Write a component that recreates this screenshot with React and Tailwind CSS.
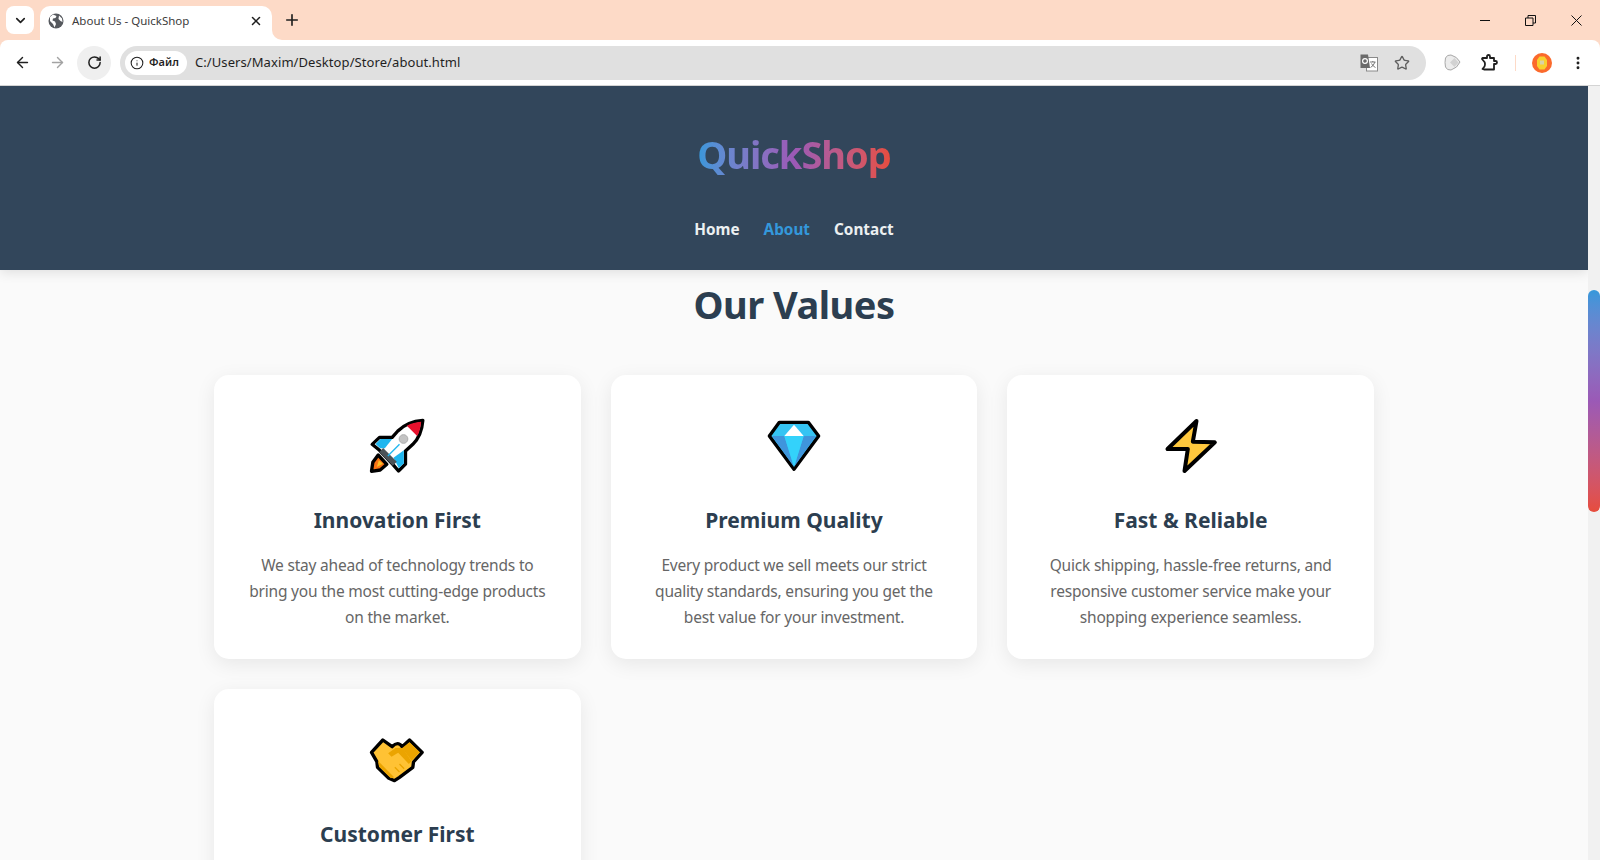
import { ArrowLeft, ArrowRight, RotateCw, ChevronDown, X, Plus, Info, Star, EllipsisVertical } from 'lucide-react'

/* ── Emoji drawings (viewBox sits in 3x reference coordinates) ── */
function Rocket() {
  return (
    <svg width="60" height="60" viewBox="52.5 33 180 180">
      <path d="M86 150 L70 172 L66 199 L92 195 L112 178Z" fill="#f97316" stroke="#000" strokeWidth="10" strokeLinejoin="round" />
      <path d="M82 186 L88 166 L100 176Z" fill="#fbbf24" />
      <path d="M220 46 C190 48 165 58 145 78 L128 97 L90 97 L68 118 L90 136 L130 178 L147 198 L168 177 L168 138 L190 118 C210 98 218 72 220 46Z" fill="#fff" stroke="#000" strokeWidth="10" strokeLinejoin="round" />
      <path d="M78 117 L93 102 L128 102 L106 130 L92 130Z" fill="#1fb6ef" />
      <path d="M132 158 L163 136 L163 175 L148 190Z" fill="#1fb6ef" />
      <path d="M172 62 C186 54 200 51 215 50 C213 68 210 82 203 93Z" fill="#e8112d" />
      <path d="M101 129 L142 170 L130 182 L89 141Z" fill="#4b5258" />
      <path d="M115 153 L150 118" stroke="#1fb6ef" strokeWidth="4" />
      <circle cx="162" cy="102" r="13" fill="#c4c4c4" stroke="#adadad" strokeWidth="3" />
    </svg>
  )
}

function Diamond() {
  return (
    <svg width="60" height="60" viewBox="57 33 180 180">
      <path d="M103 52 H190 L221 93 L147 193 L73 93Z" fill="#35c4f3" stroke="#000" strokeWidth="10" strokeLinejoin="round" />
      <path d="M81 93 H118 L147 186Z" fill="#3f95dc" />
      <path d="M213 93 H176 L147 186Z" fill="#3f95dc" />
      <path d="M118 93 H176 L147 186Z" fill="#33d2fb" />
      <path d="M147 59 L118 93 H176Z" fill="#fff" />
    </svg>
  )
}

function Bolt() {
  return (
    <svg width="60" height="60" viewBox="91.5 33 180 180">
      <path d="M198 48 L111 132 L172 132 L162 198 L253 112 L187 110Z" fill="#ffc83d" stroke="#000" strokeWidth="12" strokeLinejoin="round" />
    </svg>
  )
}

function Handshake() {
  return (
    <svg width="60" height="60" viewBox="52.5 30 180 180">
      <path d="M66 97 L100 60 L128 80 Q145 62 158 80 L180 60 L218 97 L192 126 L190 142 L150 172 L135 182 L118 175 L84 142 L82 125Z" fill="#ffc234" stroke="#000" strokeWidth="10" strokeLinejoin="round" />
      <path d="M158 84 L180 67 L211 97 L186 122 Z" fill="#eba400" />
      <path d="M85 122 L134 172 L124 175 L89 140Z" fill="#eba400" />
      <path d="M116 100 L138 84 L160 84 L186 124 L178 132 L146 98 L126 110Z" fill="#eba400" />
      <path d="M150 156 L136 142 M164 146 L150 132" stroke="#eba400" strokeWidth="4" />
    </svg>
  )
}

/* ── Browser chrome bits ─────────────────────────────── */
function Globe() {
  return (
    <svg width="16" height="16" viewBox="0 0 16 16">
      <circle cx="8" cy="8" r="7.5" fill="#56595e" />
      <path d="M5 1.5 L8.5 3 L7.5 5 L5 5.5 L4.5 7.5 L7 8.5 L8 11 L6.5 14.5 L5 11 L2 8 L2 4Z" fill="#fff" />
      <path d="M11 2.5 L14 5.5 L14.5 9 L12.5 8 L10.5 6 Z" fill="#fff" />
    </svg>
  )
}

function Translate() {
  return (
    <svg width="18" height="18" viewBox="0 0 18 18">
      <rect x="6.5" y="3.5" width="11" height="13.5" fill="#fff" stroke="#8a8a8a" />
      <path d="M0.5 0.5 H8 L10 14 H0.5Z" fill="#6b6b6b" />
      <circle cx="5" cy="7" r="2.4" fill="none" stroke="#fff" strokeWidth="1.2" />
      <path d="M10 8 H15.5 M12.8 7 V8 M15 8 Q13.5 12 10.5 13.5 M11.5 9.5 Q13 12.5 15.5 13.5" fill="none" stroke="#6b6b6b" strokeWidth="0.9" />
    </svg>
  )
}

function Blob() {
  return (
    <svg width="17" height="17" viewBox="0 0 17 17">
      <path d="M1.5 4 Q3 0.5 7 1 Q13 2.5 16 8 Q13.5 14 7 16 Q3 16.5 1.5 13 Q0.5 8.5 1.5 4Z" fill="#ececec" stroke="#a8a8a8" />
      <path d="M6 8.5 L10.5 4 L14.5 8.5 L10.5 13Z" fill="#d2d2d2" />
    </svg>
  )
}

function Extensions() {
  return (
    <svg width="17" height="17" viewBox="0 0 17 17">
      <path d="M1 5 L1.5 4 H6 V2.5 Q6 1 7.5 1 Q9 1 9 2.5 V4 H13 V7 H14.5 Q16 7 16 8.5 Q16 10 14.5 10 H13 V15.5 H3 L1.5 15 L3.5 12.5 Q4.5 10 3.5 8 Z" fill="none" stroke="#1f1f1f" strokeWidth="1.8" strokeLinejoin="round" />
    </svg>
  )
}

function Avatar() {
  return (
    <svg width="20" height="20" viewBox="0 0 20 20">
      <circle cx="10" cy="10" r="10" fill="#fb6a2c" />
      <path d="M7.5 3.5 H12.5 L15 7 V13 L12.5 16.5 H7.5 L5 13 V7Z" fill="#f8d12f" />
      <rect x="8" y="7.5" width="4" height="4" fill="#d9d3a8" />
    </svg>
  )
}

function ToolBtn({ children, className = '' }) {
  return (
    <div className={`w-[34px] h-[34px] flex items-center justify-center rounded-full shrink-0 ${className}`}>
      {children}
    </div>
  )
}

function TabStrip() {
  return (
    <div className="h-10 bg-[#fddac7] flex items-end shrink-0">
      <div className="self-start mt-[6px] ml-[6px] w-[28px] h-[28px] rounded-lg bg-white flex items-center justify-center">
        <ChevronDown size={15} strokeWidth={2.6} className="text-[#1f1f1f]" />
      </div>
      <div className="relative ml-[6px] w-[232px] h-[34px] bg-white rounded-t-[10px] flex items-center pl-[8px] pr-[9px] pb-[4px]">
        <Globe />
        <span className="ml-[8px] flex-1 text-[11.5px] text-[#3c3c3c]">About Us - QuickShop</span>
        <X size={14} strokeWidth={2.6} className="text-[#1f1f1f]" />
        <span className="absolute -right-2.5 bottom-0 w-2.5 h-2.5 bg-white">
          <span className="block w-2.5 h-2.5 bg-[#fddac7] rounded-bl-[10px]" />
        </span>
      </div>
      <div className="self-start mt-[11px] ml-[11px]">
        <Plus size={18} strokeWidth={2.2} className="text-[#1f1f1f]" />
      </div>
      <div className="flex-1" />
      <div className="self-start flex items-center h-10">
        <span className="w-[10px] h-px bg-[#111]" />
        <svg width="11" height="11" viewBox="0 0 11 11" className="ml-[35px]">
          <path d="M0.5 3 H8 V10.5 H0.5Z M3 3 V0.5 H10.5 V8 H8" fill="none" stroke="#111" />
        </svg>
        <svg width="11" height="11" viewBox="0 0 11 11" className="ml-[35px] mr-[18px]">
          <path d="M0.5 0.5 L10.5 10.5 M10.5 0.5 L0.5 10.5" stroke="#111" />
        </svg>
      </div>
    </div>
  )
}

function Toolbar() {
  return (
    <div className="h-[46px] bg-white rounded-t-lg border-b border-[#d4d4d4] flex items-center pl-[5px] shrink-0">
      <ToolBtn><ArrowLeft size={17} strokeWidth={2} className="text-[#1f1f1f]" /></ToolBtn>
      <ToolBtn className="ml-px"><ArrowRight size={17} strokeWidth={2} className="text-[#a3a3a3]" /></ToolBtn>
      <ToolBtn className="ml-[3px] bg-[#efefef]"><RotateCw size={15} strokeWidth={2.4} className="text-[#1f1f1f]" /></ToolBtn>

      <div className="ml-[9px] flex-1 h-[34px] bg-[#e0e0e0] rounded-full flex items-center pl-[5px] pr-[16px]">
        <div className="w-[62px] h-6 bg-white rounded-full flex items-center pl-[5px]">
          <Info size={14} strokeWidth={1.8} className="text-[#1f1f1f]" />
          <span className="ml-[5px] text-[11px] font-semibold text-[#1f1f1f]">Файл</span>
        </div>
        <span className="ml-[8px] flex-1 text-[13px] tracking-[0.08px] text-[#1f1f1f]">C:/Users/Maxim/Desktop/Store/about.html</span>
        <Translate />
        <Star size={16} strokeWidth={2} className="ml-[16px] text-[#5f5f5f]" />
      </div>

      <ToolBtn className="ml-[9px]"><Blob /></ToolBtn>
      <ToolBtn className="ml-[3px]"><Extensions /></ToolBtn>
      <span className="ml-[9px] w-px h-4 bg-[#fddac7] shrink-0" />
      <ToolBtn className="ml-[9px]"><Avatar /></ToolBtn>
      <ToolBtn className="ml-[2px] mr-[5px]"><EllipsisVertical size={16} strokeWidth={2.4} className="text-[#1f1f1f]" /></ToolBtn>
    </div>
  )
}

/* ── Page content ────────────────────────────────────── */
const VALUES = [
  { icon: <Rocket />, title: 'Innovation First', lines: ['We stay ahead of technology trends to', 'bring you the most cutting-edge products', 'on the market.'] },
  { icon: <Diamond />, title: 'Premium Quality', lines: ['Every product we sell meets our strict', 'quality standards, ensuring you get the', 'best value for your investment.'] },
  { icon: <Bolt />, title: 'Fast & Reliable', lines: ['Quick shipping, hassle-free returns, and', 'responsive customer service make your', 'shopping experience seamless.'] },
  { icon: <Handshake />, title: 'Customer First', lines: [] },
]

function ValueCard({ value }) {
  return (
    <div className="h-[284px] bg-white rounded-[15px] shadow-[0_5px_20px_rgba(0,0,0,0.08)] pt-[41px] px-[30px] text-center">
      <div className="flex justify-center h-[60px]">{value.icon}</div>
      <h3 className="mt-[25px] text-[21px] leading-[38px] font-bold text-[#2c3e50]">{value.title}</h3>
      <p className="mt-[13px] text-[15.5px] tracking-[-0.2px] leading-[26px] text-[#666]">
        {value.lines.map((l) => <span key={l} className="block whitespace-nowrap">{l}</span>)}
      </p>
    </div>
  )
}

export default function App() {
  return (
    <div className="h-screen overflow-hidden flex flex-col bg-[#fddac7] font-['Noto_Sans',sans-serif]">
      <TabStrip />
      <Toolbar />
      <div className="flex flex-1 min-h-0">
        <main className="flex-1 min-w-0 bg-[#fafafa] overflow-hidden">
          <header className="h-[184px] bg-[#32465b] shadow-[0_2px_12px_rgba(0,0,0,0.12)] flex flex-col items-center pt-[37px]">
            <h1 className="text-[38px] tracking-[-1px] leading-[62px] font-bold bg-gradient-to-r from-[#3498db] via-[#9b59b6] to-[#e74c3c] bg-clip-text text-transparent">
              QuickShop
            </h1>
            <nav className="mt-[31px] flex gap-6 text-[15.3px] leading-[26px] font-bold text-[#ecf0f1]">
              <span>Home</span>
              <span className="text-[#3498db]">About</span>
              <span>Contact</span>
            </nav>
          </header>
          <section className="w-[1160px] mx-auto pt-[7px]">
            <h2 className="text-[38px] tracking-[-0.5px] leading-[54px] font-bold text-center text-[#2c3e50]">Our Values</h2>
            <div className="mt-[44px] grid grid-cols-3 gap-[30px]">
              {VALUES.map((v) => <ValueCard key={v.title} value={v} />)}
            </div>
          </section>
        </main>
        <div className="w-3 shrink-0 bg-[#f1f1f1] pt-[204px]">
          <div className="h-[222px] rounded-md bg-gradient-to-b from-[#3498db] via-[#9b59b6] to-[#e74c3c]" />
        </div>
      </div>
    </div>
  )
}
